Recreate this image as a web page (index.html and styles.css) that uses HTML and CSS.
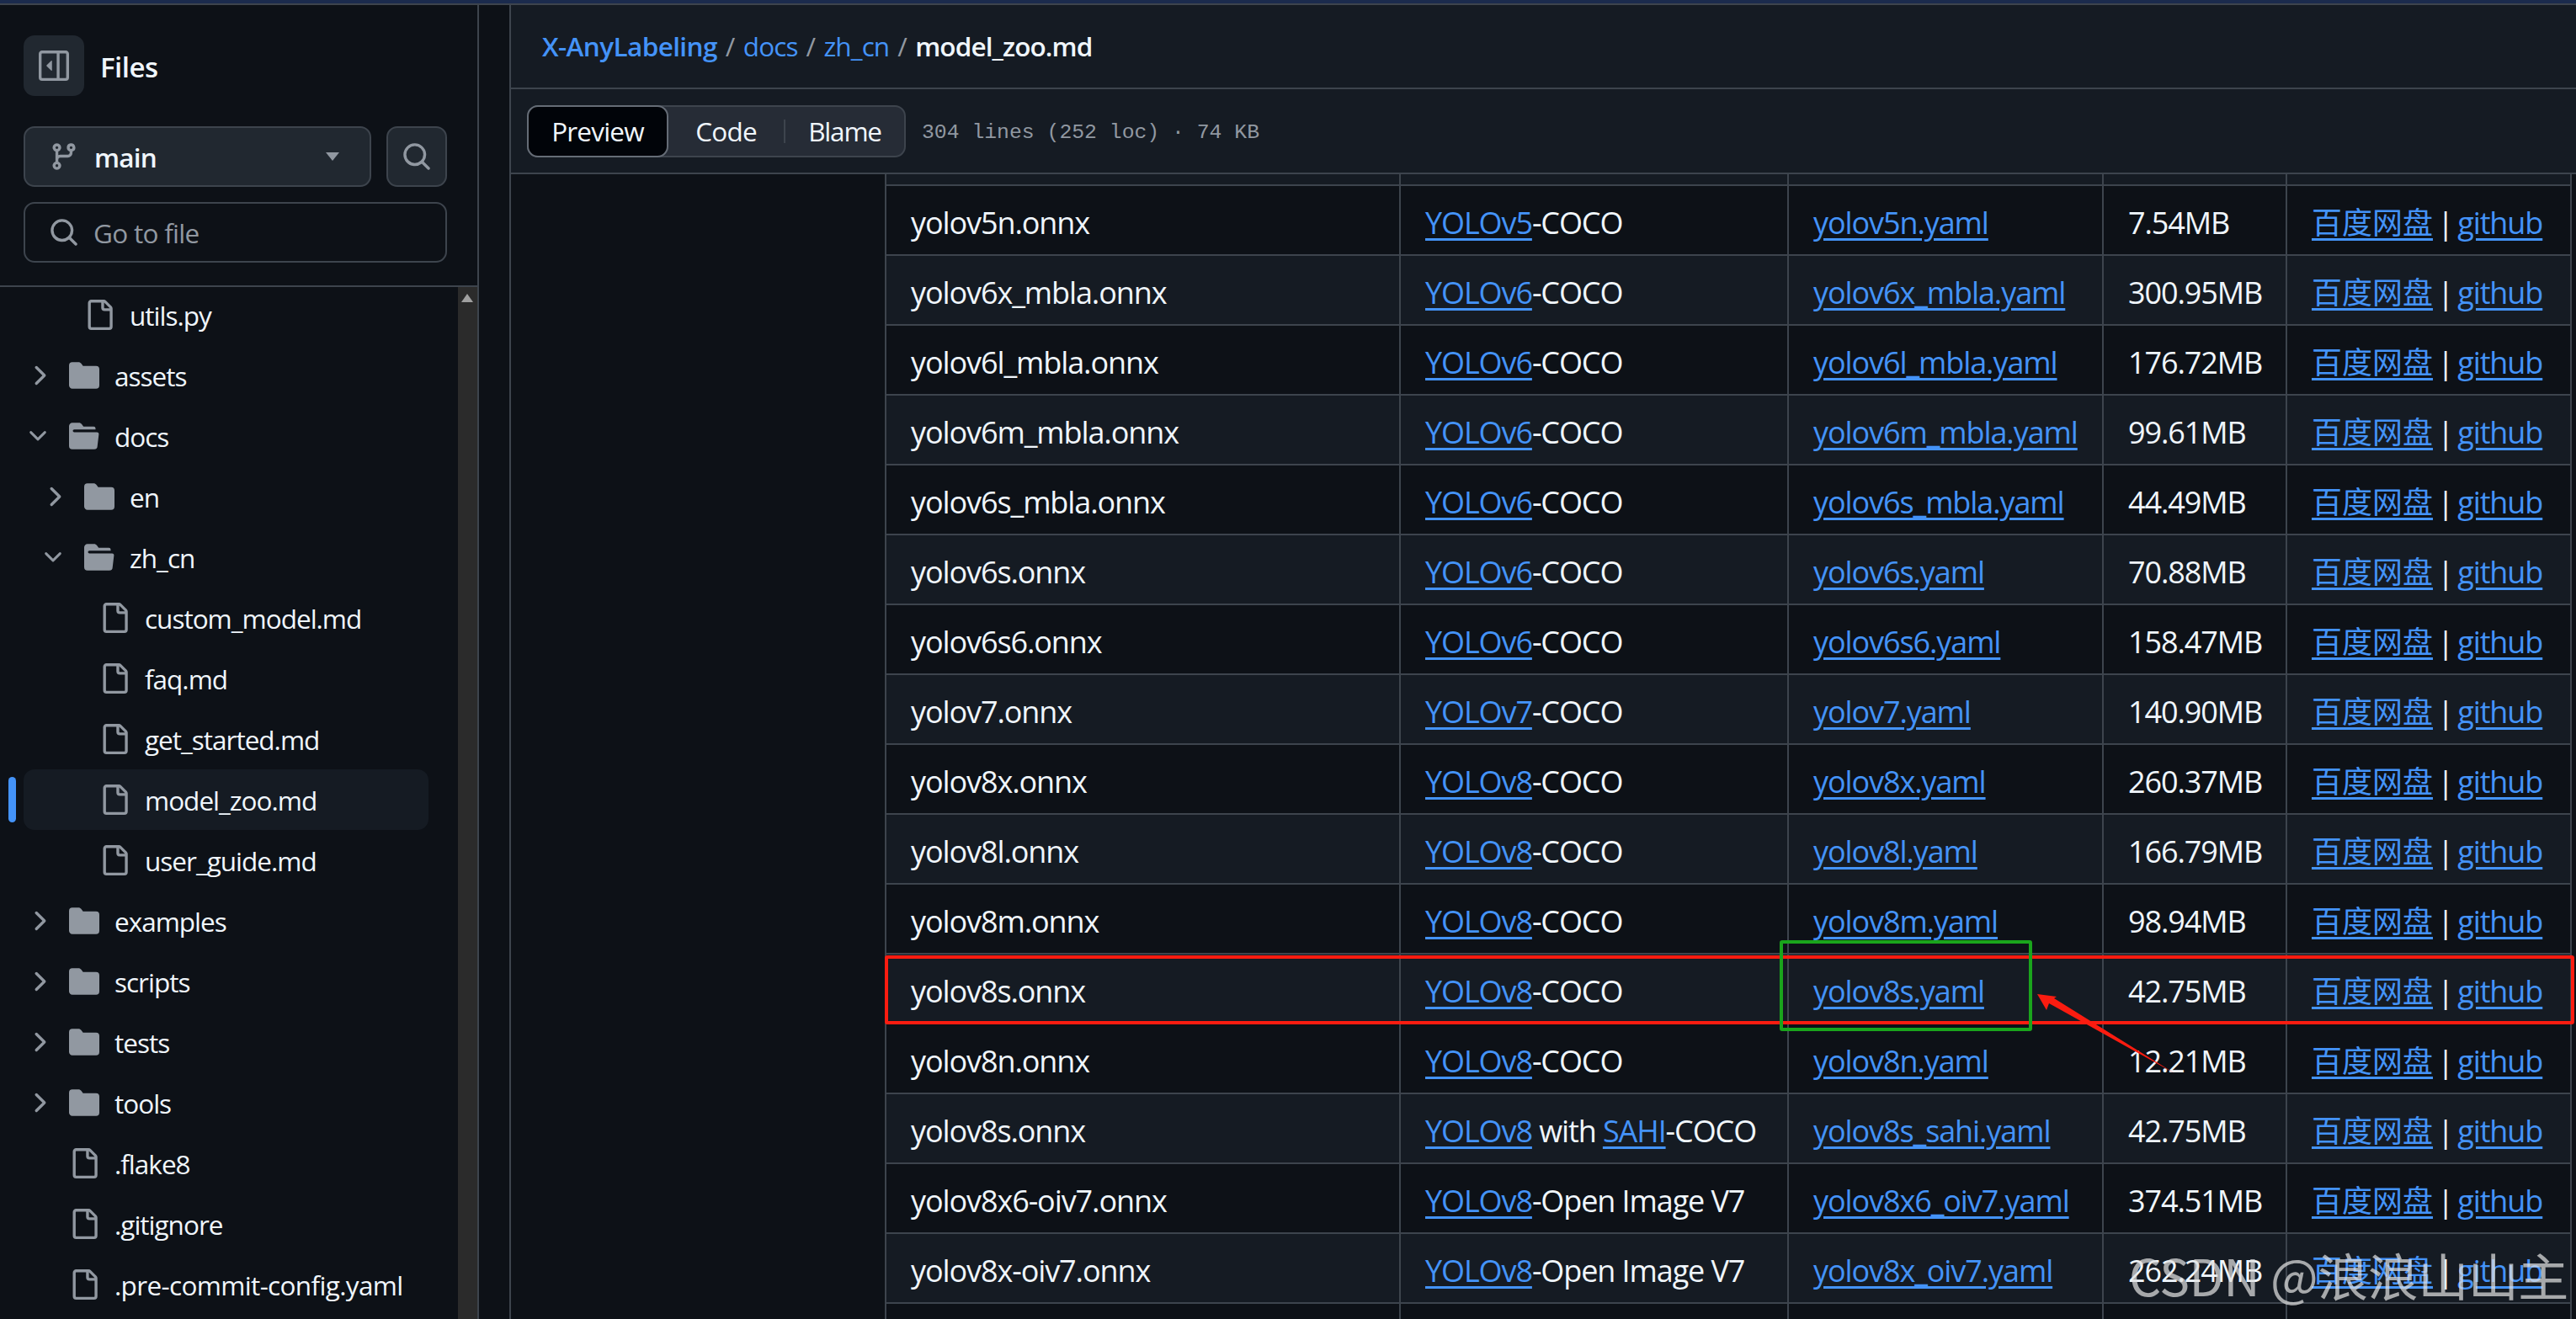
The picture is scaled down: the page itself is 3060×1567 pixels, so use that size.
FILE: index.html
```html
<!DOCTYPE html>
<html lang="en">
<head>
<meta charset="utf-8">
<title>model_zoo.md</title>
<link rel="stylesheet" href="styles.css">
</head>
<body>
<svg class="sprite" xmlns="http://www.w3.org/2000/svg">
  <symbol id="i-file" viewBox="0 0 16 16"><path d="M2 1.75C2 .784 2.784 0 3.75 0h6.586c.464 0 .909.184 1.237.513l2.914 2.914c.329.328.513.773.513 1.237v9.586A1.75 1.75 0 0 1 13.25 16h-9.5A1.75 1.75 0 0 1 2 14.25Zm1.75-.25a.25.25 0 0 0-.25.25v12.5c0 .138.112.25.25.25h9.5a.25.25 0 0 0 .25-.25V6h-2.75A1.75 1.75 0 0 1 9 4.25V1.5Zm6.75.062V4.25c0 .138.112.25.25.25h2.688l-.011-.013-2.914-2.914-.013-.011Z"/></symbol>
  <symbol id="i-folder" viewBox="0 0 16 16"><path d="M1.75 1A1.75 1.75 0 0 0 0 2.75v10.5C0 14.216.784 15 1.75 15h12.5A1.75 1.75 0 0 0 16 13.25v-8.5A1.75 1.75 0 0 0 14.25 3H7.5a.25.25 0 0 1-.2-.1l-.9-1.2C6.07 1.26 5.55 1 5 1H1.75Z"/></symbol>
  <symbol id="i-folder-open" viewBox="0 0 16 16"><path d="M.513 1.513A1.75 1.75 0 0 1 1.75 1h3.5c.55 0 1.07.26 1.4.7l.9 1.2a.25.25 0 0 0 .2.1H13a1 1 0 0 1 1 1v.5H2.75a.75.75 0 0 0 0 1.5h11.978a1 1 0 0 1 .994 1.117L15 13.25A1.75 1.75 0 0 1 13.25 15H1.75A1.75 1.75 0 0 1 0 13.25V2.75c0-.464.184-.91.513-1.237Z"/></symbol>
  <symbol id="i-right" viewBox="0 0 16 16"><path d="M6.22 3.22a.75.75 0 0 1 1.06 0l4.25 4.25a.75.75 0 0 1 0 1.06l-4.25 4.25a.751.751 0 0 1-1.042-.018.751.751 0 0 1-.018-1.042L9.94 8 6.22 4.28a.75.75 0 0 1 0-1.06Z"/></symbol>
  <symbol id="i-down" viewBox="0 0 16 16"><path d="M12.78 5.22a.749.749 0 0 1 0 1.06l-4.25 4.25a.749.749 0 0 1-1.06 0L3.22 6.28a.749.749 0 1 1 1.06-1.06L8 8.939l3.72-3.719a.749.749 0 0 1 1.06 0Z"/></symbol>
  <symbol id="i-search" viewBox="0 0 16 16"><path d="M10.68 11.74a6 6 0 0 1-7.922-8.982 6 6 0 0 1 8.982 7.922l3.04 3.04a.749.749 0 0 1-.326 1.275.749.749 0 0 1-.734-.215ZM11.5 7a4.499 4.499 0 1 0-8.997 0A4.499 4.499 0 0 0 11.5 7Z"/></symbol>
  <symbol id="i-branch" viewBox="0 0 16 16"><path d="M9.5 3.25a2.25 2.25 0 1 1 3 2.122V6A2.5 2.5 0 0 1 10 8.5H6a1 1 0 0 0-1 1v1.128a2.251 2.251 0 1 1-1.5 0V5.372a2.25 2.25 0 1 1 1.5 0v1.836A2.493 2.493 0 0 1 6 7h4a1 1 0 0 0 1-1v-.628A2.25 2.25 0 0 1 9.5 3.25Zm-6 0a.75.75 0 1 0 1.5 0 .75.75 0 0 0-1.5 0Zm8.25-.75a.75.75 0 1 0 0 1.5.75.75 0 0 0 0-1.5ZM4.25 12a.75.75 0 1 0 0 1.5.75.75 0 0 0 0-1.5Z"/></symbol>
  <symbol id="i-panel" viewBox="0 0 16 16"><path d="M4.177 7.823l2.396-2.396A.25.25 0 0 1 7 5.604v4.792a.25.25 0 0 1-.427.177L4.177 8.177a.25.25 0 0 1 0-.354Z"/><path d="M1.75 0h12.5C15.216 0 16 .784 16 1.75v12.5A1.75 1.75 0 0 1 14.25 16H1.75A1.75 1.75 0 0 1 0 14.25V1.75C0 .784.784 0 1.75 0ZM1.5 1.75v12.5c0 .138.112.25.25.25H9.5v-13H1.75a.25.25 0 0 0-.25.25ZM11 14.5h3.25a.25.25 0 0 0 .25-.25V1.75a.25.25 0 0 0-.25-.25H11Z"/></symbol>
</svg>

<div class="topbar"></div>
<div class="layout">
  <aside class="sidebar">
    <div class="side-head">
      <div class="title-row">
        <button class="toggle"><svg class="ico"><use href="#i-panel"/></svg></button>
        <h2 class="files">Files</h2>
      </div>
      <div class="branch-row">
        <button class="branch"><svg class="ico"><use href="#i-branch"/></svg><span class="branch-name">main</span><span class="caret"></span></button>
        <button class="search-btn"><svg class="ico"><use href="#i-search"/></svg></button>
      </div>
      <div class="goto"><svg class="ico"><use href="#i-search"/></svg><span>Go to file</span></div>
    </div>
    <div class="tree-wrap">
      <ul class="tree">
        <li class="row lv2"><span class="chev"></span><svg class="ico"><use href="#i-file"/></svg><span>utils.py</span></li>
        <li class="row lv1"><svg class="ico chev"><use href="#i-right"/></svg><svg class="ico"><use href="#i-folder"/></svg><span>assets</span></li>
        <li class="row lv1"><svg class="ico chev chev-d"><use href="#i-down"/></svg><svg class="ico"><use href="#i-folder-open"/></svg><span>docs</span></li>
        <li class="row lv2"><svg class="ico chev"><use href="#i-right"/></svg><svg class="ico"><use href="#i-folder"/></svg><span>en</span></li>
        <li class="row lv2"><svg class="ico chev chev-d"><use href="#i-down"/></svg><svg class="ico"><use href="#i-folder-open"/></svg><span>zh_cn</span></li>
        <li class="row lv3"><span class="chev"></span><svg class="ico"><use href="#i-file"/></svg><span>custom_model.md</span></li>
        <li class="row lv3"><span class="chev"></span><svg class="ico"><use href="#i-file"/></svg><span>faq.md</span></li>
        <li class="row lv3"><span class="chev"></span><svg class="ico"><use href="#i-file"/></svg><span>get_started.md</span></li>
        <li class="row lv3 active"><span class="chev"></span><svg class="ico"><use href="#i-file"/></svg><span>model_zoo.md</span></li>
        <li class="row lv3"><span class="chev"></span><svg class="ico"><use href="#i-file"/></svg><span>user_guide.md</span></li>
        <li class="row lv1"><svg class="ico chev"><use href="#i-right"/></svg><svg class="ico"><use href="#i-folder"/></svg><span>examples</span></li>
        <li class="row lv1"><svg class="ico chev"><use href="#i-right"/></svg><svg class="ico"><use href="#i-folder"/></svg><span>scripts</span></li>
        <li class="row lv1"><svg class="ico chev"><use href="#i-right"/></svg><svg class="ico"><use href="#i-folder"/></svg><span>tests</span></li>
        <li class="row lv1"><svg class="ico chev"><use href="#i-right"/></svg><svg class="ico"><use href="#i-folder"/></svg><span>tools</span></li>
        <li class="row lv1"><span class="chev"></span><svg class="ico"><use href="#i-file"/></svg><span>.flake8</span></li>
        <li class="row lv1"><span class="chev"></span><svg class="ico"><use href="#i-file"/></svg><span>.gitignore</span></li>
        <li class="row lv1"><span class="chev"></span><svg class="ico"><use href="#i-file"/></svg><span class="long-name">.pre-commit-config.yaml</span></li>
      </ul>
      <div class="scrollbar"><span class="scroll-up"></span></div>
    </div>
  </aside>
  <div class="gutter"></div>
  <main class="content">
    <header class="crumbs">
      <a>X-AnyLabeling</a><span class="sep">/</span><a>docs</a><span class="sep">/</span><a>zh_cn</a><span class="sep">/</span><strong>model_zoo.md</strong>
    </header>
    <div class="toolbar">
      <div class="seg">
        <span class="seg-on">Preview</span>
        <span class="seg-item">Code</span>
        <span class="seg-div"></span>
        <span class="seg-item">Blame</span>
      </div>
      <span class="meta">304 lines (252 loc) · 74 KB</span>
    </div>
    <div class="doc">
      <table class="zoo">
        <colgroup><col class="c1"><col class="c2"><col class="c3"><col class="c4"><col class="c5"></colgroup>
        <tbody>
          <tr class="stub"><td></td><td></td><td></td><td></td><td></td></tr>
          <tr><td>yolov5n.onnx</td><td><a>YOLOv5</a>-COCO</td><td><a>yolov5n.yaml</a></td><td>7.54MB</td><td><a class="cjk">百度网盘</a> | <a>github</a></td></tr>
          <tr><td>yolov6x_mbla.onnx</td><td><a>YOLOv6</a>-COCO</td><td><a>yolov6x_mbla.yaml</a></td><td>300.95MB</td><td><a class="cjk">百度网盘</a> | <a>github</a></td></tr>
          <tr><td>yolov6l_mbla.onnx</td><td><a>YOLOv6</a>-COCO</td><td><a>yolov6l_mbla.yaml</a></td><td>176.72MB</td><td><a class="cjk">百度网盘</a> | <a>github</a></td></tr>
          <tr><td>yolov6m_mbla.onnx</td><td><a>YOLOv6</a>-COCO</td><td><a>yolov6m_mbla.yaml</a></td><td>99.61MB</td><td><a class="cjk">百度网盘</a> | <a>github</a></td></tr>
          <tr><td>yolov6s_mbla.onnx</td><td><a>YOLOv6</a>-COCO</td><td><a>yolov6s_mbla.yaml</a></td><td>44.49MB</td><td><a class="cjk">百度网盘</a> | <a>github</a></td></tr>
          <tr><td>yolov6s.onnx</td><td><a>YOLOv6</a>-COCO</td><td><a>yolov6s.yaml</a></td><td>70.88MB</td><td><a class="cjk">百度网盘</a> | <a>github</a></td></tr>
          <tr><td>yolov6s6.onnx</td><td><a>YOLOv6</a>-COCO</td><td><a>yolov6s6.yaml</a></td><td>158.47MB</td><td><a class="cjk">百度网盘</a> | <a>github</a></td></tr>
          <tr><td>yolov7.onnx</td><td><a>YOLOv7</a>-COCO</td><td><a>yolov7.yaml</a></td><td>140.90MB</td><td><a class="cjk">百度网盘</a> | <a>github</a></td></tr>
          <tr><td>yolov8x.onnx</td><td><a>YOLOv8</a>-COCO</td><td><a>yolov8x.yaml</a></td><td>260.37MB</td><td><a class="cjk">百度网盘</a> | <a>github</a></td></tr>
          <tr><td>yolov8l.onnx</td><td><a>YOLOv8</a>-COCO</td><td><a>yolov8l.yaml</a></td><td>166.79MB</td><td><a class="cjk">百度网盘</a> | <a>github</a></td></tr>
          <tr><td>yolov8m.onnx</td><td><a>YOLOv8</a>-COCO</td><td><a>yolov8m.yaml</a></td><td>98.94MB</td><td><a class="cjk">百度网盘</a> | <a>github</a></td></tr>
          <tr><td>yolov8s.onnx</td><td><a>YOLOv8</a>-COCO</td><td><a>yolov8s.yaml</a></td><td>42.75MB</td><td><a class="cjk">百度网盘</a> | <a>github</a></td></tr>
          <tr><td>yolov8n.onnx</td><td><a>YOLOv8</a>-COCO</td><td><a>yolov8n.yaml</a></td><td>12.21MB</td><td><a class="cjk">百度网盘</a> | <a>github</a></td></tr>
          <tr><td>yolov8s.onnx</td><td><a>YOLOv8</a> with <a>SAHI</a>-COCO</td><td><a>yolov8s_sahi.yaml</a></td><td>42.75MB</td><td><a class="cjk">百度网盘</a> | <a>github</a></td></tr>
          <tr><td>yolov8x6-oiv7.onnx</td><td><a>YOLOv8</a>-Open Image V7</td><td><a>yolov8x6_oiv7.yaml</a></td><td>374.51MB</td><td><a class="cjk">百度网盘</a> | <a>github</a></td></tr>
          <tr><td>yolov8x-oiv7.onnx</td><td><a>YOLOv8</a>-Open Image V7</td><td><a>yolov8x_oiv7.yaml</a></td><td>262.24MB</td><td><a class="cjk">百度网盘</a> | <a>github</a></td></tr>
          <tr><td></td><td></td><td></td><td></td><td></td></tr>
        </tbody>
      </table>
    </div>
  </main>
</div>

<div class="mark-row"></div>
<div class="mark-cell"></div>
<svg class="mark-arrow" viewBox="0 0 180 110" xmlns="http://www.w3.org/2000/svg"><polygon points="4,5 15,24 18,16 167,99 24,10 27,8"/></svg>
<div class="watermark">CSDN @浪浪山山主</div>
</body>
</html>
```

FILE: styles.css
```css
* { box-sizing: border-box; }
html, body { margin: 0; padding: 0; height: 1567px; overflow: hidden; }
body {
  position: relative;
  background: #0d1117;
  color: #f0f6fc;
  font-family: "Open Sans", "Noto Sans CJK SC", sans-serif;
}
.sprite { display: none; }
.ico { width: 36px; height: 36px; fill: #9198a1; flex: none; display: block; }
button { font: inherit; color: inherit; padding: 0; cursor: pointer; }

.topbar { height: 6px; background: #1b2b4d; border-bottom: 2px solid #3d444d; }
.layout { display: flex; height: 1561px; }

/* sidebar */
.sidebar { width: 569px; flex: none; border-right: 2px solid #3d444d; display: flex; flex-direction: column; }
.side-head { height: 335px; flex: none; padding: 36px 36px 0 28px; border-bottom: 2px solid #3d444d; display: flex; flex-direction: column; }
.title-row { display: flex; align-items: center; gap: 19px; height: 72px; }
.toggle { width: 72px; height: 72px; border: 0; border-radius: 13px; background: #212830; display: flex; align-items: center; justify-content: center; }
.files { margin: 2px 0 0; font-size: 33px; font-weight: 600; letter-spacing: -0.5px; color: #f0f6fc; }
.branch-row { display: flex; gap: 18px; margin-top: 36px; }
.branch { flex: 1; height: 72px; background: #212830; border: 2px solid #3d444d; border-radius: 13px; display: flex; align-items: center; padding: 0 36px 0 28px; }
.branch-name { margin-left: 18px; font-size: 31.5px; font-weight: 600; letter-spacing: -0.8px; }
.caret { margin-left: auto; width: 0; height: 0; border-left: 8px solid transparent; border-right: 8px solid transparent; border-top: 10px solid #9198a1; }
.search-btn { width: 72px; height: 72px; flex: none; background: #212830; border: 2px solid #3d444d; border-radius: 13px; display: flex; align-items: center; justify-content: center; }
.goto { margin-top: 18px; height: 72px; border: 2px solid #3d444d; border-radius: 13px; display: flex; align-items: center; gap: 17px; padding-left: 28px; font-size: 31.5px; letter-spacing: -0.7px; color: #9198a1; }

.tree-wrap { flex: 1; display: flex; min-height: 0; overflow: hidden; }
.tree { list-style: none; margin: -3px 0 0; padding: 0 0 0 28px; flex: 1; min-width: 0; }
.scrollbar { width: 23px; flex: none; background: #2b2b2b; position: relative; }
.scroll-up { position: absolute; left: 4px; top: 8px; width: 0; height: 0; border-left: 7.5px solid transparent; border-right: 7.5px solid transparent; border-bottom: 10px solid #a0a0a0; }
.row { position: relative; width: 481px; height: 72px; display: flex; align-items: center; gap: 18px; font-size: 31.5px; letter-spacing: -1px; border-radius: 13px; white-space: nowrap; color: #f0f6fc; }
.long-name { letter-spacing: -0.65px; }
.chev { width: 36px; height: 36px; flex: none; }
.chev-d { transform: translateX(-1px) scale(.87); }
.lv1 { padding-left: 0; }
.lv2 { padding-left: 18px; }
.lv3 { padding-left: 36px; }
.active { background: #151b23; }
.active::before { content: ""; position: absolute; left: -18px; top: 9px; width: 9px; height: 54px; border-radius: 5px; background: #4493f8; }

/* main */
.gutter { width: 38px; flex: none; border-right: 2px solid #3d444d; }
.content { flex: 1; min-width: 0; display: flex; flex-direction: column; }
.crumbs { height: 100px; flex: none; background: #151b23; border-bottom: 2px solid #3d444d; display: flex; align-items: center; padding-left: 37px; padding-bottom: 1px; font-size: 31.5px; letter-spacing: -0.6px; }
.crumbs a { color: #4493f8; font-weight: 600; }
.crumbs a + .sep + a { font-weight: 400; letter-spacing: -0.9px; }
.sep { color: #9198a1; margin: 0 10px; font-weight: 400; }
.crumbs strong { font-weight: 600; letter-spacing: -0.9px; }
.toolbar { height: 101px; flex: none; background: #151b23; border-bottom: 2px solid #3d444d; display: flex; align-items: center; padding-left: 19px; font-size: 31.5px; }
.seg { height: 62px; width: 450px; display: flex; align-items: center; background: #262c36; border: 2px solid #3d444d; border-radius: 13px; letter-spacing: -0.8px; }
.seg-on { width: 168px; height: 62px; margin: -2px 0 -2px -2px; flex: none; display: flex; align-items: center; justify-content: center; background: #010409; border: 2px solid #656c76; border-radius: 13px; }
.seg-item { display: block; text-align: center; }
.seg-item:nth-child(2) { width: 138px; }
.seg-item:nth-child(4) { width: 142px; letter-spacing: -1.2px; }
.seg-div { width: 2px; height: 28px; background: #3d444d; flex: none; }
.meta { margin-left: 19px; padding-top: 2px; font-family: "Liberation Mono", monospace; font-size: 24.75px; color: #9198a1; }

.doc { flex: 1; min-height: 0; overflow: hidden; padding-left: 444px; }
.zoo { width: 2002px; table-layout: fixed; border-collapse: collapse; font-size: 36px; line-height: 48px; letter-spacing: -1.1px; }
.c1 { width: 611px; } .c2 { width: 461px; } .c3 { width: 374px; } .c4 { width: 218px; } .c5 { width: 338px; }
.zoo td { height: 83px; padding: 6px 0 0 29px; border: 2px solid #3d444d; white-space: nowrap; color: #f0f6fc; }
.zoo td:last-child { word-spacing: -3px; }
.zoo tr:nth-child(odd) td { background: #151b23; }
.zoo tr:nth-child(even) td { background: #0d1117; }
.zoo .stub td { height: 13px; padding: 0; border-top: 0; line-height: 0; }
.zoo a { color: #4493f8; text-decoration: underline; text-decoration-thickness: 3px; text-underline-offset: 5px; }
.zoo a.cjk { letter-spacing: 0; }

/* annotations laid over the screenshot */
.mark-row { position: absolute; left: 1051px; top: 1135px; width: 2007px; height: 82px; border: 4px solid #fb1c10; border-radius: 3px; }
.mark-cell { position: absolute; left: 2114px; top: 1117px; width: 300px; height: 108px; border: 4px solid #1aa51c; border-radius: 3px; }
.mark-arrow { position: absolute; left: 2416px; top: 1176px; width: 180px; height: 110px; fill: #fb1c10; }
.watermark { position: absolute; left: 2529px; top: 1472px; font-family: "Noto Sans CJK SC", sans-serif; font-size: 60px; line-height: 84px; font-weight: 400; letter-spacing: -0.5px; color: rgba(225, 225, 225, .72); white-space: nowrap; }
```
